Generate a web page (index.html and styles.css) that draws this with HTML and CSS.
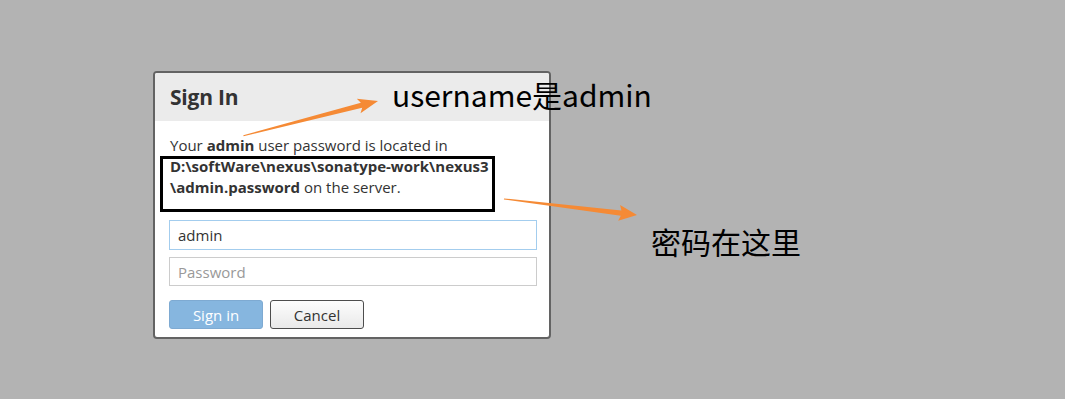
FILE: index.html
```html
<!DOCTYPE html>
<html lang="en">
<head>
  <meta charset="UTF-8" />
  <title>Sign In</title>
  <link rel="stylesheet" href="styles.css">
</head>
<body>

  <div class="page">
    <div class="dialog">
      <div class="dialog-header">
        <h2>Sign In</h2>
      </div>
      <div class="dialog-body">
        <p class="hint">
          Your <b>admin</b> user password is located in<br>
          <b>D:\softWare\nexus\sonatype-work\nexus3<br>\admin.password</b> on the server.
        </p>
        <form class="login-form">
          <input class="field field-active" type="text" value="admin">
          <input class="field" type="password" placeholder="Password">
          <div class="actions">
            <button type="button" class="btn btn-primary">Sign in</button>
            <button type="button" class="btn btn-default">Cancel</button>
          </div>
        </form>
      </div>
    </div>

    <!-- screenshot annotations -->
    <div class="mark-box"></div>
    <div class="note note-user">username是admin</div>
    <div class="note note-pass">密码在这里</div>
    <svg class="arrows" width="1065" height="399" viewBox="0 0 1065 399">
      <g transform="translate(378 101) rotate(-14.5)">
        <polygon points="-139,-0.5 -17,-2.6 -20,-7.5 0,0 -20,7.5 -17,2.6 -139,0.5" fill="#f58a35"/>
      </g>
      <g transform="translate(637 215) rotate(6.9)">
        <polygon points="-134,-0.5 -16,-2.6 -18,-8 0,0 -18,8 -16,2.6 -134,0.5" fill="#f58a35"/>
      </g>
    </svg>
  </div>

</body>
</html>
```

FILE: styles.css
```css
:root {
  --page-bg: #b3b3b3;
  --text: #333;
  --orange: #f58a35;
}

* {
  box-sizing: border-box;
  margin: 0;
  padding: 0;
}

body {
  font-family: 'Open Sans', 'Liberation Sans', sans-serif;
  background: var(--page-bg);
  color: var(--text);
}

.page {
  position: relative;
  width: 1065px;
  height: 399px;
  padding: 71px 0 0 153px;
}

.dialog {
  width: 398px;
  height: 268px;
  background: #fff;
  border: 2px solid #636363;
  border-radius: 4px;
  overflow: hidden;
}

.dialog-header {
  height: 48px;
  background: #ebebeb;
  padding: 10px 15px 0;
}

.dialog-header h2 {
  font-size: 21px;
  line-height: 28px;
  font-weight: 700;
  color: #333;
  letter-spacing: -0.2px;
}

.dialog-body {
  padding: 14px 12px 0 14px;
}

.hint {
  font-size: 15px;
  line-height: 21px;
  padding-left: 1px;
  color: #333;
  white-space: nowrap;
}

.hint b {
  font-weight: 700;
}

.login-form {
  display: flex;
  flex-direction: column;
  gap: 7px;
  margin-top: 22px;
}

.field {
  width: 368px;
  height: 29px;
  border: 1px solid #ccc;
  padding: 0 8px;
  font-family: inherit;
  font-size: 15px;
  color: #333;
  outline: none;
}

.field-active {
  height: 30px;
  border-color: #a3cdee;
}

.field::placeholder {
  color: #999;
}

.actions {
  display: flex;
  gap: 7px;
  margin-top: 7px;
}

.btn {
  width: 94px;
  height: 29px;
  border-radius: 3px;
  font-family: inherit;
  font-size: 15px;
}

.btn-primary {
  background: #86b6df;
  border: 1px solid #7eaad2;
  color: #fff;
}

.btn-default {
  background: linear-gradient(#fdfdfd, #e9e9e9);
  border: 1px solid #4d4d4d;
  color: #333;
}

/* annotations drawn on top of the screenshot */
.mark-box {
  position: absolute;
  left: 160px;
  top: 156px;
  width: 335px;
  height: 56px;
  border: 3px solid #000;
}

.note {
  position: absolute;
  font-family: 'Noto Sans CJK SC', 'Noto Sans', sans-serif;
  font-size: 30px;
  line-height: 1;
  color: #000;
  white-space: nowrap;
}

.note-user {
  left: 392px;
  top: 79px;
}

.note-pass {
  left: 651px;
  top: 226px;
}

.arrows {
  position: absolute;
  left: 0;
  top: 0;
  pointer-events: none;
}
```
